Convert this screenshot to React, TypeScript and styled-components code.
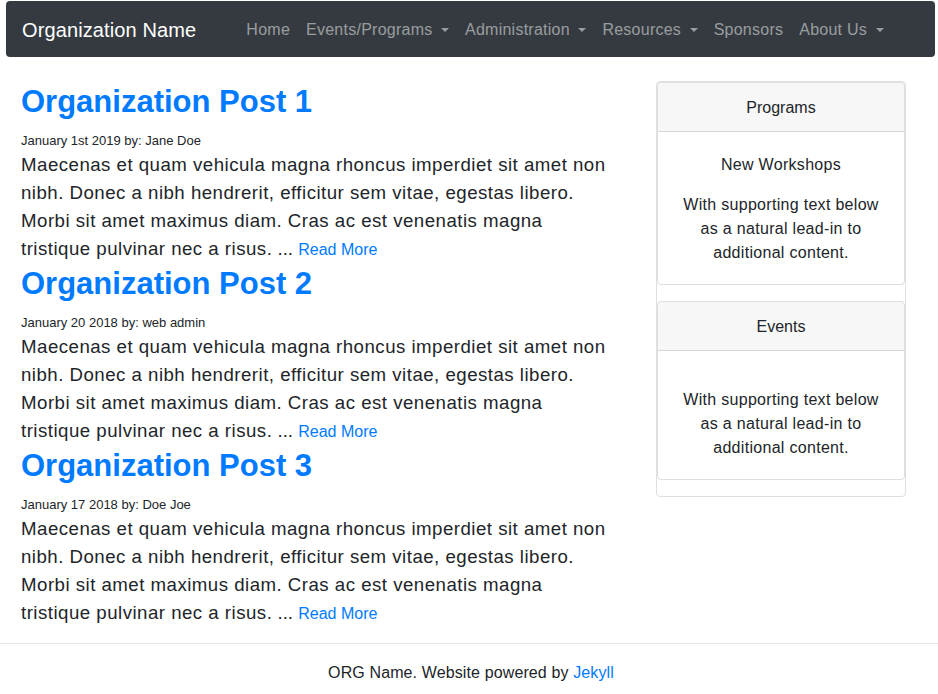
import React from "react";
import styled, { createGlobalStyle } from "styled-components";

const GlobalStyle = createGlobalStyle`
  html, body {
    margin: 0;
    padding: 0;
    background: #fff;
  }
  body {
    font-family: "Liberation Sans", Arial, sans-serif;
    color: #212529;
    font-size: 16px;
    line-height: 1.5;
  }
  a {
    color: #007bff;
    text-decoration: none;
  }
`;

const Page = styled.div`
  display: flex;
  flex-direction: column;
`;

const Navbar = styled.nav`
  box-sizing: border-box;
  display: flex;
  align-items: center;
  height: 56px;
  margin: 1px 3px 0 6px;
  padding: 1px 16px 0;
  background-color: #343a40;
  border-radius: 4px;
`;

const Brand = styled.a`
  color: #fff;
  font-size: 20px;
  line-height: 30px;
  letter-spacing: 0.12px;
  margin-right: 42px;
  white-space: nowrap;
`;

const NavList = styled.ul`
  display: flex;
  list-style: none;
  margin: 0;
  padding: 0;
`;

const NavLink = styled.a<{ $dropdown?: boolean }>`
  display: flex;
  align-items: center;
  padding: 8px;
  color: rgba(255, 255, 255, 0.5);
  font-size: 16px;
  letter-spacing: 0.25px;
  white-space: nowrap;

  ${(p) =>
    p.$dropdown &&
    `
    &::after {
      content: "";
      display: inline-block;
      margin-left: 8.5px;
      margin-top: 1px;
      border-top: 4px solid;
      border-left: 4px solid transparent;
      border-right: 4px solid transparent;
    }
  `}
`;

const Main = styled.div`
  display: grid;
  grid-template-columns: 590px 250px;
  column-gap: 45px;
  padding: 24px 0 16px 21px;
`;

const Posts = styled.div`
  display: flex;
  flex-direction: column;
`;

const Post = styled.article`
  display: flex;
  flex-direction: column;
`;

const PostTitle = styled.a`
  font-size: 31px;
  font-weight: 700;
  line-height: 38px;
  margin-top: 2px;
`;

const PostMeta = styled.div`
  font-size: 13px;
  line-height: 19px;
  margin-top: 10px;
`;

const PostBody = styled.p`
  margin: 1px 0 0;
  font-size: 18.67px;
  letter-spacing: 0.48px;
  line-height: 28px;
`;

const Tail = styled.span`
  letter-spacing: 0;
`;

const ReadMore = styled.a`
  font-size: 16px;
  line-height: 1;
`;

const Sidebar = styled.aside`
  display: flex;
  flex-direction: column;
  gap: 16px;
  padding-bottom: 16px;
  border: 1px solid rgba(0, 0, 0, 0.125);
  border-radius: 4px;
  align-self: start;
`;

const Card = styled.div`
  border: 1px solid rgba(0, 0, 0, 0.125);
  border-radius: 4px;
  text-align: center;
  overflow: hidden;
`;

const CardHeader = styled.div`
  padding: 13px 20px 11px;
  background-color: rgba(0, 0, 0, 0.03);
  border-bottom: 1px solid rgba(0, 0, 0, 0.125);
  line-height: 24px;
`;

const CardBody = styled.div<{ $spacer?: boolean }>`
  display: flex;
  flex-direction: column;
  gap: 16px;
  padding: ${(p) => (p.$spacer ? "37px" : "21px")} 20px 19px;
`;

const CardText = styled.p`
  margin: 0;
  line-height: 24px;
  letter-spacing: 0.3px;
`;

const Footer = styled.footer`
  border-top: 1px solid #e5e5e5;
  padding: 17px 0 15px 4px;
  text-align: center;
  line-height: 24px;
  letter-spacing: 0.12px;
`;

const navItems = [
  { label: "Home" },
  { label: "Events/Programs", dropdown: true },
  { label: "Administration", dropdown: true },
  { label: "Resources", dropdown: true },
  { label: "Sponsors" },
  { label: "About Us", dropdown: true },
];

const excerpt =
  "Maecenas et quam vehicula magna rhoncus imperdiet sit amet non nibh. Donec a nibh hendrerit, efficitur sem vitae, egestas libero. Morbi sit amet maximus diam. Cras ac est venenatis magna tristique pulvinar nec a risus.";

const posts = [
  { title: "Organization Post 1", meta: "January 1st 2019 by: Jane Doe" },
  { title: "Organization Post 2", meta: "January 20 2018 by: web admin" },
  { title: "Organization Post 3", meta: "January 17 2018 by: Doe Joe" },
];

const supporting = "With supporting text below as a natural lead-in to additional content.";

export default function App() {
  return (
    <Page>
      <GlobalStyle />
      <Navbar>
        <Brand href="#">Organization Name</Brand>
        <NavList>
          {navItems.map((item) => (
            <li key={item.label}>
              <NavLink href="#" $dropdown={item.dropdown}>
                {item.label}
              </NavLink>
            </li>
          ))}
        </NavList>
      </Navbar>

      <Main>
        <Posts>
          {posts.map((post) => (
            <Post key={post.title}>
              <PostTitle href="#">{post.title}</PostTitle>
              <PostMeta>{post.meta}</PostMeta>
              <PostBody>
                {excerpt}
                <Tail>
                  {" ... "}
                  <ReadMore href="#">Read More</ReadMore>
                </Tail>
              </PostBody>
            </Post>
          ))}
        </Posts>

        <Sidebar>
          <Card>
            <CardHeader>Programs</CardHeader>
            <CardBody>
              <CardText>New Workshops</CardText>
              <CardText>{supporting}</CardText>
            </CardBody>
          </Card>
          <Card>
            <CardHeader>Events</CardHeader>
            <CardBody $spacer>
              <CardText>{supporting}</CardText>
            </CardBody>
          </Card>
        </Sidebar>
      </Main>

      <Footer>
        ORG Name. Website powered by <a href="#">Jekyll</a>
      </Footer>
    </Page>
  );
}
